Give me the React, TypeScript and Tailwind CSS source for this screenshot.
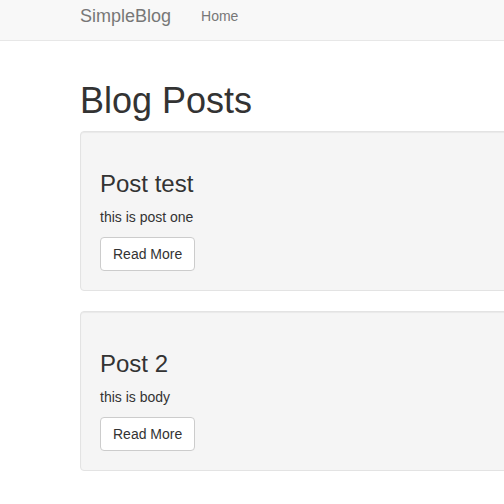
import React from "react";

const posts = [
  { title: "Post test", body: "this is post one" },
  { title: "Post 2", body: "this is body" },
];

export default function App() {
  return (
    <div
      className="w-full min-h-[504px] overflow-hidden bg-white text-[#333]"
      style={{ fontFamily: '"Liberation Sans", Arial, sans-serif' }}
    >
      <nav className="h-[41px] bg-[#f8f8f8] border-b border-[#e7e7e7]">
        <div className="flex items-start gap-[30px] pl-[80px] pt-[6px]">
          <span className="text-[18px] leading-[20px] text-[#777]">SimpleBlog</span>
          <span className="text-[14px] leading-[20px] text-[#777]">Home</span>
        </div>
      </nav>
      <main className="pl-[80px] pt-[20px] w-[800px]">
        <h1 className="mt-[20px] mb-[10px] text-[36px] leading-[1.1] font-normal">Blog Posts</h1>
        {posts.map((p) => (
          <div
            key={p.title}
            className="mb-[20px] rounded-[4px] border border-[#e3e3e3] bg-[#f5f5f5] p-[19px] shadow-[inset_0_1px_1px_rgba(0,0,0,0.05)]"
          >
            <h3 className="mt-[20px] mb-[10px] text-[24px] leading-[1.1] font-normal">{p.title}</h3>
            <p className="mb-[10px] text-[14px] leading-[20px]">{p.body}</p>
            <button className="rounded-[4px] border border-[#ccc] bg-white px-[12px] py-[6px] text-[14px] leading-[20px] text-[#333]">
              Read More
            </button>
          </div>
        ))}
      </main>
    </div>
  );
}
